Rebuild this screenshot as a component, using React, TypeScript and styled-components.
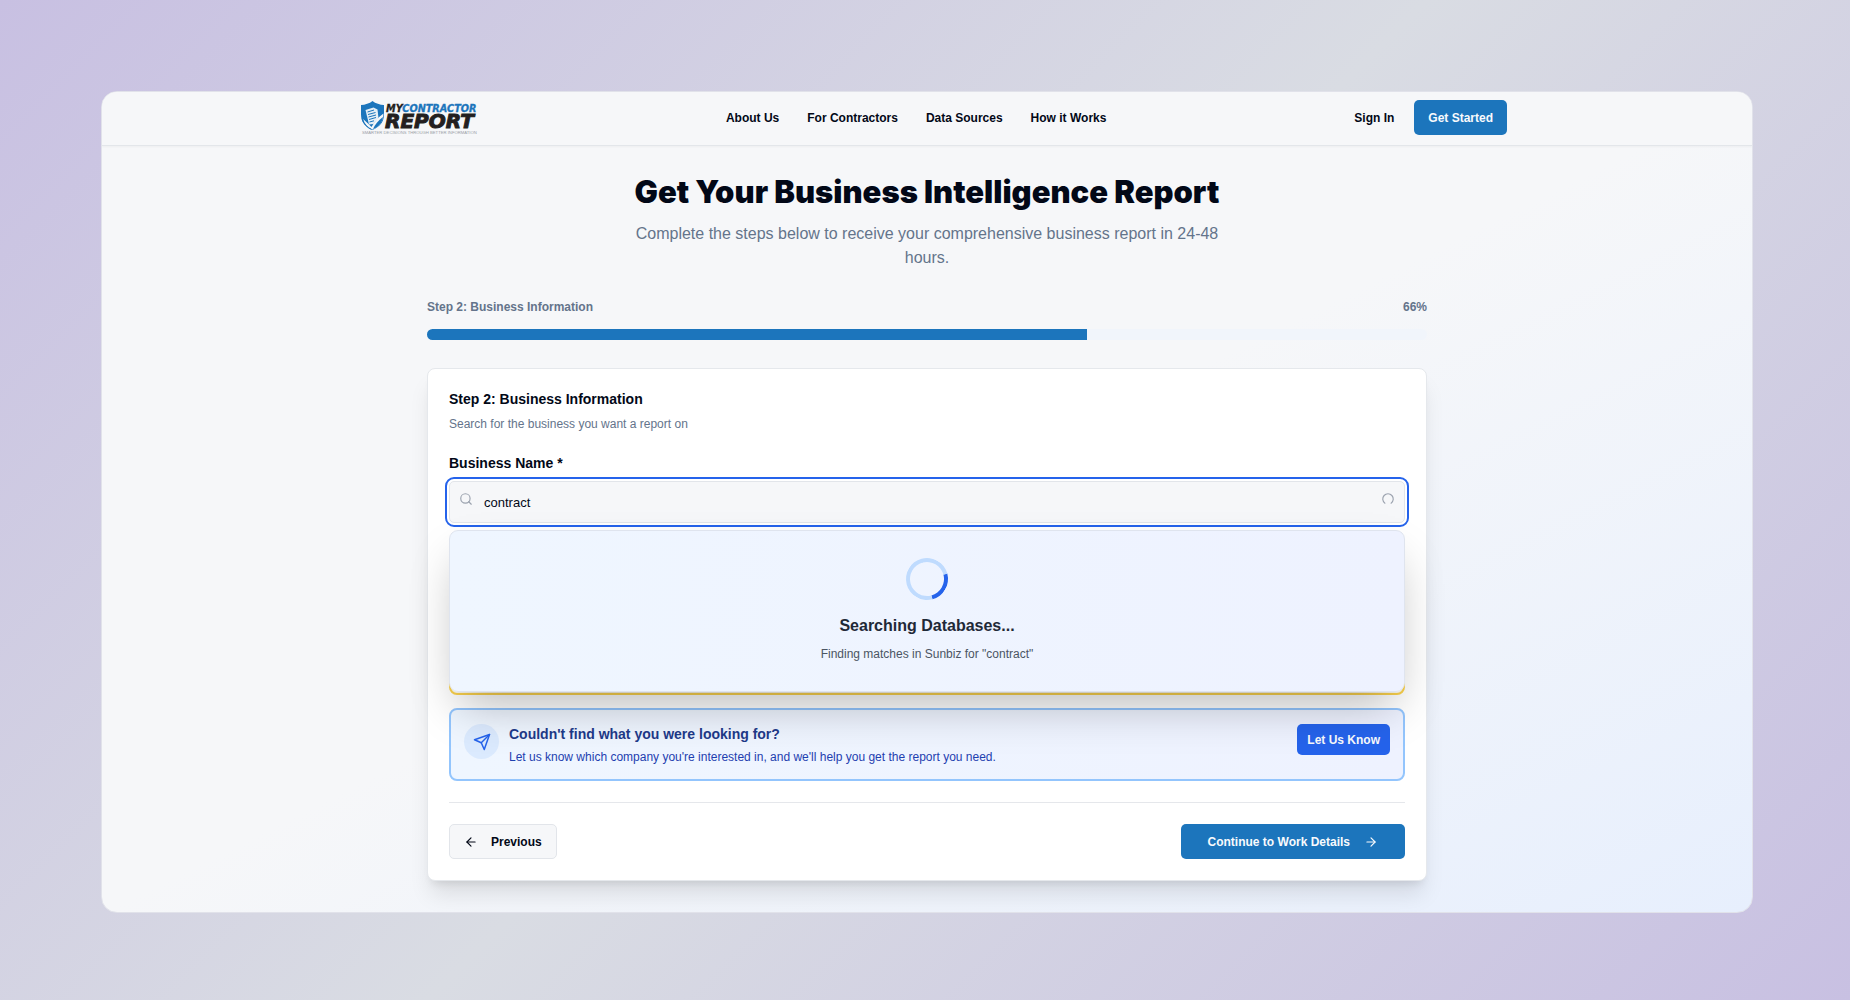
import React, { useState } from "react";
import styled, { createGlobalStyle } from "styled-components";
import { ArrowLeft, ArrowRight, LoaderCircle, Search } from "lucide-react";

const GlobalStyle = createGlobalStyle`
  *, *::before, *::after { box-sizing: border-box; }
  body {
    margin: 0;
    color: #020817;
    font-family: "Liberation Sans", Arial, Helvetica, sans-serif;
    font-size: 12px;
    line-height: 18px;
  }
  h1, h2, h3, p { margin: 0; }
  button, input { font-family: inherit; }
`;

const Backdrop = styled.div`
  display: flex;
  min-height: 100vh;
  padding: 91px 97px 89px 101px;
  background: linear-gradient(135deg, #c8c0e2 0%, #d9dce3 50%, #c8c0e2 100%);
`;

const Frame = styled.div`
  flex: 1;
  min-width: 0;
  border: 1px solid #e1e2ea;
  border-radius: 16px;
  overflow: hidden;
  background: linear-gradient(to bottom right, #f6f7f9 0%, #f6f7f9 50%, #e7effd 100%);
`;

const Header = styled.header`
  display: flex;
  justify-content: center;
  border-bottom: 1px solid #e3e6ea;
  background: #f6f7f9;
  box-shadow: 0 1px 2px rgba(0, 0, 0, 0.04);
`;

const HeaderInner = styled.div`
  display: flex;
  align-items: center;
  justify-content: space-between;
  width: 100%;
  max-width: 1160px;
  height: 53px;
  padding: 0 0 2px 13px;
`;

const LogoLink = styled.a`
  display: block;
  line-height: 0;
`;

const Nav = styled.nav`
  display: flex;
  gap: 28px;
`;

const NavLink = styled.a`
  color: #020817;
  font-weight: 700;
  text-decoration: none;
`;

const HeaderActions = styled.div`
  display: flex;
  align-items: center;
  gap: 20px;
`;

const Button = styled.button<{ $tone?: "primary" | "blue" | "outline" }>`
  display: inline-flex;
  align-items: center;
  justify-content: center;
  height: ${(p) => (p.$tone === "blue" ? 31 : 35)}px;
  padding: 0 ${(p) => (p.$tone === "blue" ? 10 : 14)}px;
  border: ${(p) => (p.$tone === "outline" ? "1px solid #e2e5ea" : "0")};
  border-radius: 5px;
  background: ${(p) =>
    p.$tone === "outline" ? "#f6f7f9" : p.$tone === "blue" ? "#2563eb" : "#1c75bc"};
  color: ${(p) => (p.$tone === "outline" ? "#020817" : "#f8fafc")};
  font-size: 12px;
  font-weight: 700;
  white-space: nowrap;
  cursor: pointer;
`;

const Continue = styled(Button)`
  gap: 14px;
  padding: 0 27px;
`;

const Previous = styled(Button)`
  gap: 13px;
`;

const Main = styled.main`
  width: 100%;
  max-width: 1000px;
  margin: 0 auto;
  padding: 28px 0 31px;
`;

const Intro = styled.div`
  max-width: 620px;
  margin: 0 auto;
  text-align: center;
`;

const Title = styled.h1`
  font-family: Inter, "Open Sans", sans-serif;
  font-size: 31px;
  font-weight: 900;
  line-height: 36px;
`;

const Subtitle = styled.p`
  margin-top: 12px;
  color: #64748b;
  font-size: 16px;
  line-height: 24px;
`;

const ProgressHead = styled.div`
  display: flex;
  justify-content: space-between;
  margin-top: 28px;
  color: #64748b;
  font-weight: 700;
`;

const Track = styled.div`
  height: 11px;
  margin-top: 13px;
  border-radius: 6px;
  overflow: hidden;
  background: #f1f5fb;
`;

const Fill = styled.div`
  height: 100%;
  background: #1c75bc;
`;

const Card = styled.section`
  margin-top: 28px;
  padding: 21px;
  border: 1px solid #e5e8ec;
  border-radius: 8px;
  background: #fff;
  box-shadow: 0 17px 22px -4px rgba(0, 0, 0, 0.1), 0 7px 9px -5px rgba(0, 0, 0, 0.1);
`;

const CardTitle = styled.h2`
  font-size: 14px;
  font-weight: 700;
  line-height: 18px;
`;

const CardText = styled.p`
  margin-top: 7px;
  color: #64748b;
`;

const Label = styled.label`
  display: block;
  margin-top: 21px;
  font-size: 14px;
  font-weight: 700;
  line-height: 18px;
`;

const Field = styled.div`
  position: relative;
  margin-top: 9px;
`;

const TextInput = styled.input`
  display: block;
  width: 100%;
  height: 42px;
  padding: 0 34px;
  border: 1px solid #e2e5ea;
  border-radius: 5px;
  outline: 2px solid #2563eb;
  outline-offset: 2px;
  background: #f6f7f9;
  color: #020817;
  font-size: 13px;
`;

const FieldIcon = styled.span<{ $side: "left" | "right" }>`
  position: absolute;
  top: 11px;
  ${(p) => p.$side}: 10px;
  display: flex;
  color: #9ca3af;
`;

const Spin = styled.span`
  display: flex;
  transform: rotate(126deg);
`;

const Dropdown = styled.div`
  position: absolute;
  z-index: 2;
  top: 49px;
  left: 0;
  right: 0;
  display: flex;
  flex-direction: column;
  align-items: center;
  height: 162px;
  padding-top: 27px;
  border: 1px solid #dfe4ee;
  border-radius: 9px;
  background: linear-gradient(to right, #eff6ff, #eef2ff);
  box-shadow: 0 22px 44px -10px rgba(0, 0, 0, 0.28);
`;

const Ring = styled.div`
  width: 42px;
  height: 42px;
  border: 4px solid #bfdbfe;
  border-top-color: #2563eb;
  border-radius: 50%;
  transform: rotate(120deg);
`;

const DropTitle = styled.h3`
  margin-top: 14px;
  color: #1f2937;
  font-size: 16px;
  line-height: 24px;
`;

const DropText = styled.p`
  margin-top: 7px;
  color: #4b5563;
`;

const Warning = styled.div`
  height: 87px;
  margin-top: 85px;
  border: 2px solid #fcd34d;
  border-radius: 8px;
  background: #fffbeb;
`;

const Help = styled.div`
  display: flex;
  align-items: flex-start;
  gap: 10px;
  margin-top: 13px;
  padding: 14px 13px 13px;
  border: 2px solid #93c5fd;
  border-radius: 8px;
  background: linear-gradient(to right, #eff6ff, #eef2ff);
`;

const HelpIcon = styled.span`
  display: flex;
  align-items: center;
  justify-content: center;
  width: 35px;
  height: 35px;
  border-radius: 50%;
  background: #dbeafe;
  color: #2563eb;
`;

const HelpBody = styled.div`
  flex: 1;
`;

const HelpTitle = styled.h3`
  color: #1e3a8a;
  font-size: 14px;
  line-height: 20px;
`;

const HelpText = styled.p`
  margin-top: 4px;
  color: #1e40af;
`;

const Footer = styled.div`
  display: flex;
  justify-content: space-between;
  margin-top: 21px;
  padding-top: 21px;
  border-top: 1px solid #e5e7eb;
`;

function Logo() {
  return (
    <svg width="118" height="36" viewBox="0 0 118 36" role="img" aria-label="My Contractor Report">
      <path d="M12.500 1C9.500 3.500 5 4.800 1 5v9.500c0 7.500 4.500 12.500 11.500 15.500C19.500 27 24 22 24 14.500V5C20 4.800 15.500 3.500 12.500 1Z" fill="#1c75bc" />
      <path d="M5.500 10l8-2.500 4 2 1 8.500-5 6-4.500.500Z" fill="#e4eef6" />
      <path d="M7.500 12l6.500-2M8 14.500l7.500-2M8.500 17l7.500-2M9 19.500l7-2M9.500 22l4.500-1.200" stroke="#1c75bc" strokeWidth="1" />
      <path d="M3 19c3 3 6 5 8.500 8 3-5.500 6.500-9.500 12-13.500-.500 9-5 13.500-11 16-4.500-2-8-5.500-9.500-10.500Z" fill="#f6f7f9" />
      <path d="M13 29c2-4.500 5-8.500 10-12-1 6-4.500 10-10 12Z" fill="#1c75bc" />
      <path d="M2 18.500c1.500 5.500 5 9 9.500 11" stroke="#1c75bc" strokeWidth="1" fill="none" />
      <g fontFamily="DejaVu Sans, sans-serif" fontWeight="700" fontStyle="italic">
        <text x="26" y="12" fontSize="9.700" fill="#231f20" stroke="#231f20" strokeWidth="0.300">
          MY<tspan fill="#1c75bc" stroke="#1c75bc">CONTRACTOR</tspan>
        </text>
        <text x="25" y="28" fontSize="20" fill="#231f20" stroke="#231f20" strokeWidth="1">REPORT</text>
      </g>
      <text x="2" y="34" fontFamily="Liberation Sans, sans-serif" fontSize="4.200" fill="#9a9ea6">
        SMARTER DECISIONS THROUGH BETTER INFORMATION
      </text>
    </svg>
  );
}

function SendIcon() {
  return (
    <svg width="18" height="18" viewBox="0 0 24 24" fill="none" stroke="currentColor" strokeWidth="2" strokeLinecap="round" strokeLinejoin="round" aria-hidden="true">
      <path d="m22 2-7 20-4-9-9-4Z" />
      <path d="M22 2 11 13" />
    </svg>
  );
}

const navItems = ["About Us", "For Contractors", "Data Sources", "How it Works"];

export default function App() {
  const [query, setQuery] = useState("contract");
  const progress = 66;

  return (
    <>
      <GlobalStyle />
      <Backdrop>
        <Frame>
          <Header>
            <HeaderInner>
              <LogoLink href="#"><Logo /></LogoLink>
              <Nav>
                {navItems.map((item) => (
                  <NavLink href="#" key={item}>{item}</NavLink>
                ))}
              </Nav>
              <HeaderActions>
                <NavLink href="#">Sign In</NavLink>
                <Button type="button">Get Started</Button>
              </HeaderActions>
            </HeaderInner>
          </Header>
          <Main>
            <Intro>
              <Title>Get Your Business Intelligence Report</Title>
              <Subtitle>
                Complete the steps below to receive your comprehensive business report in 24-48 hours.
              </Subtitle>
            </Intro>
            <ProgressHead>
              <span>Step 2: Business Information</span>
              <span>{progress}%</span>
            </ProgressHead>
            <Track>
              <Fill style={{ width: `${progress}%` }} />
            </Track>
            <Card>
              <CardTitle>Step 2: Business Information</CardTitle>
              <CardText>Search for the business you want a report on</CardText>
              <Label htmlFor="business-name">Business Name *</Label>
              <Field>
                <TextInput id="business-name" value={query} onChange={(e) => setQuery(e.target.value)} />
                <FieldIcon $side="left"><Search size={14} /></FieldIcon>
                <FieldIcon $side="right"><Spin><LoaderCircle size={14} /></Spin></FieldIcon>
                <Dropdown>
                  <Ring />
                  <DropTitle>Searching Databases...</DropTitle>
                  <DropText>Finding matches in Sunbiz for "{query}"</DropText>
                </Dropdown>
              </Field>
              <Warning />
              <Help>
                <HelpIcon><SendIcon /></HelpIcon>
                <HelpBody>
                  <HelpTitle>Couldn't find what you were looking for?</HelpTitle>
                  <HelpText>
                    Let us know which company you're interested in, and we'll help you get the report you need.
                  </HelpText>
                </HelpBody>
                <Button type="button" $tone="blue">Let Us Know</Button>
              </Help>
              <Footer>
                <Previous type="button" $tone="outline"><ArrowLeft size={14} />Previous</Previous>
                <Continue type="button">Continue to Work Details<ArrowRight size={14} /></Continue>
              </Footer>
            </Card>
          </Main>
        </Frame>
      </Backdrop>
    </>
  );
}
